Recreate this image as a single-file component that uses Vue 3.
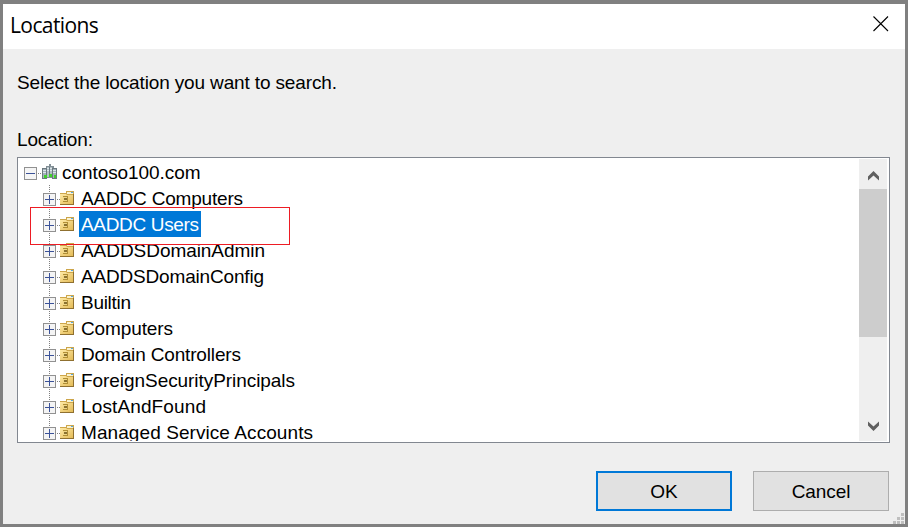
<script setup>
const items = [
  { name: 'AADDC Computers', w: 162 },
  { name: 'AADDC Users', w: 118, selected: true },
  { name: 'AADDSDomainAdmin', w: 184 },
  { name: 'AADDSDomainConfig', w: 183 },
  { name: 'Builtin', w: 50 },
  { name: 'Computers', w: 92 },
  { name: 'Domain Controllers', w: 160 },
  { name: 'ForeignSecurityPrincipals', w: 214 },
  { name: 'LostAndFound', w: 125 },
  { name: 'Managed Service Accounts', w: 232 },
]
</script>

<template>
  <div class="page">
    <div class="dialog">
      <header class="titlebar">
        <h1>Locations</h1>
        <svg class="close" width="16" height="16" viewBox="0 0 16 16"><path d="M.5.5l14.5 14.5M15 .5L.5 15" stroke="#000" stroke-width="1.1" /></svg>
      </header>
      <main class="body">
        <p class="prompt">Select the location you want to search.</p>
        <p class="label">Location:</p>
        <section class="list">
          <div class="tree">
            <div class="row root">
              <svg class="box" width="13" height="13" viewBox="0 0 13 13" shape-rendering="crispEdges">
                <rect x=".5" y=".5" width="12" height="12" fill="#f5f5f5" stroke="#919191" />
                <path d="M2 6h9v1H2z" fill="#3b5298" />
              </svg>
              <svg class="dots" width="4" height="26" shape-rendering="crispEdges"><path d="M1 14h1v1H1zM3 14h1v1H3z" fill="#808080" /></svg>
              <svg class="domain" width="16" height="16" viewBox="0 0 16 16">
                <path d="M4 2h3V0h2v2h3v12H4z" fill="#828f96" />
                <path d="M5 3h5v10H5z" fill="#b3c0c6" />
                <path d="M0 4h5v11H0zM10 4h5v11h-5z" fill="#6c7980" />
                <path d="M1 5h3v9H1zM11 5h3v9h-3z" fill="#a3b1b9" />
                <path d="M1 6.5h3M1 8.5h3M11 6.5h3M11 8.5h3M5 4.5h5M5 6.5h5" stroke="#dce6ea" />
                <path d="M7 3h1v9H7z" fill="#6b7b85" />
                <path d="M2 11h3v3H2zM7 10h3v3H7zM12 11h2v3h-2z" fill="#41cf2c" />
              </svg>
              <span class="name">contoso100.com</span>
            </div>
            <div v-for="item in items" :key="item.name" class="row child">
              <svg class="branch" width="17" height="26" viewBox="0 0 17 26" shape-rendering="crispEdges">
                <path d="M6.5 0v26" stroke="#808080" stroke-dasharray="1 1" />
                <path d="M14 14h1v1h-1zM16 14h1v1h-1z" fill="#808080" />
                <rect x=".5" y="8.5" width="12" height="12" fill="#f4f4f4" stroke="#919191" />
                <path d="M2 14h9v1H2zM6 10h1v9H6z" fill="#3b5298" />
              </svg>
              <svg class="folder" width="14" height="14" viewBox="0 0 14 14">
                <defs>
                  <linearGradient id="face" x2="1" y2="1"><stop stop-color="#ffeaa6" /><stop offset="1" stop-color="#e3bb58" /></linearGradient>
                </defs>
                <path d="M0 2h6V0h8v14H0z" fill="#cda64b" />
                <path d="M7 1h6v2H7z" fill="#faf3d0" />
                <path d="M11 1h2v1h-2z" fill="#58a5dd" />
                <path d="M0 3h6l1 1h6v9H0z" fill="url(#face)" />
                <path d="M0 13h14v1H0zM13 3h1v11h-1z" fill="#8f7030" />
                <path d="M3 5h5v6H3z" fill="#b08e35" />
                <path d="M3 6h4v4H3z" fill="#f0d787" />
                <path d="M4 7h3v2H4z" fill="#8a7130" />
              </svg>
              <span class="name" :class="{ selected: item.selected }"><svg class="caption" :width="item.w" height="26"><text x="0" y="20" :textLength="item.w" lengthAdjust="spacing">{{ item.name }}</text></svg></span>
            </div>
          </div>
          <div class="scrollbar">
            <svg width="28" height="30" viewBox="0 0 28 30"><path d="M9 17.5v4l5.5-5 5.5 5v-4L14.5 12z" fill="#606060" /></svg>
            <div class="thumb"></div>
            <svg class="down" width="28" height="30" viewBox="0 0 28 30"><path d="M9 10.500v4l5.500 5.500 5.500-5.500v-4l-5.500 5z" fill="#606060" /></svg>
          </div>
        </section>
        <footer class="actions">
          <button class="ok">OK</button>
          <button>Cancel</button>
        </footer>
      </main>
      <svg class="grip" width="11" height="11" viewBox="0 0 11 11" shape-rendering="crispEdges">
        <path d="M8 0h3v3H8zM4 4h3v3H4zM8 4h3v3H8zM0 8h3v3H0zM4 8h3v3H4zM8 8h3v3H8z" fill="#bfbfbf" />
      </svg>
    </div>
    <div class="highlight"></div>
  </div>
</template>

<style>
body { margin: 0; background: #fff; overflow: hidden; }
</style>

<style scoped>
* { box-sizing: border-box; }
.page { position: relative; width: 908px; height: 529px; background: #fff; font-family: "Liberation Sans", Arial, sans-serif; font-size: 19px; color: #000; }
.dialog { position: relative; height: 527px; border: 3px solid #808080; border-top-width: 4px; background: #efefef; }
.titlebar { display: flex; justify-content: space-between; height: 45px; padding: 11px 16px 0 7px; background: #fff; }
h1 { margin: -4px 0 0; font: 400 21px/28px "Open Sans", sans-serif; letter-spacing: -.6px; }
.close { margin-top: 1px; }
.body { padding: 0 15px 0 14px; }
p { margin: 0; line-height: 24px; }
.prompt { padding-top: 22px; letter-spacing: -.14px; }
.label { padding-top: 33px; letter-spacing: -.14px; }
.list { display: flex; justify-content: space-between; width: 873px; height: 286px; margin-top: 5px; padding: 1px 2px 1px 1px; border: 1px solid #828790; background: #fff; }
.tree { height: 282px; overflow: hidden; }
.row { display: flex; height: 26px; white-space: nowrap; }
.root { padding-left: 5px; }
.box { margin-top: 8px; }
.domain { margin: 5px 0 0 1px; }
.root .name { padding-left: 4px; line-height: 27px; letter-spacing: -.07px; }
.child { padding-left: 24px; }
.folder { margin-top: 6px; }
.child .name { height: 26px; margin-left: 5px; padding: 0 2px; }
.caption { display: block; overflow: visible; fill: currentColor; }
.selected { background: #0078d7; color: #fff; }
.scrollbar { display: flex; flex-direction: column; width: 28px; height: 282px; background: #efefef; }
.thumb { height: 148px; background: #cdcdcd; }
.down { margin-top: auto; }
.actions { display: flex; justify-content: flex-end; gap: 21px; width: 872px; margin-top: 28px; }
button { width: 136px; height: 40px; padding: 2px 0 0; border: 1px solid #adadad; background: #e1e1e1; color: #000; font: inherit; letter-spacing: -.1px; }
.ok { border: 2px solid #0078d7; }
.grip { position: absolute; right: 1px; bottom: 0; }
.highlight { position: absolute; left: 30px; top: 207px; width: 260px; height: 38px; border: 1px solid #ed1c24; }
</style>
